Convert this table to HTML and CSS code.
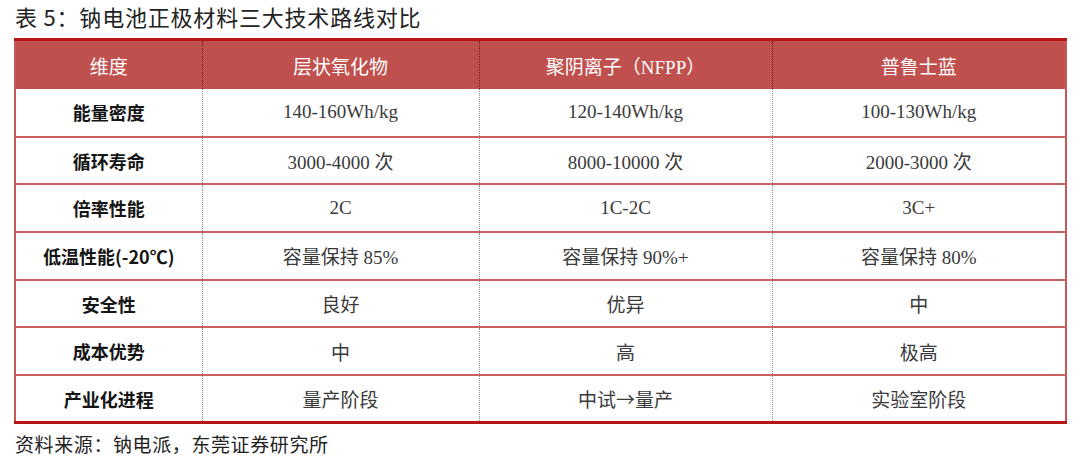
FILE: index.html
```html
<!DOCTYPE html>
<html lang="zh-CN">
<head>
<meta charset="utf-8">
<title>表 5</title>
<link rel="stylesheet" href="styles.css">
</head>
<body>
<div class="page">
  <div class="title">表 5：钠电池正极材料三大技术路线对比</div>
  <table class="cmp">
    <colgroup>
      <col class="c1"><col class="c2"><col class="c3"><col class="c4">
    </colgroup>
    <thead>
      <tr><th>维度</th><th>层状氧化物</th><th>聚阴离子（NFPP）</th><th>普鲁士蓝</th></tr>
    </thead>
    <tbody>
      <tr><td class="k">能量密度</td><td>140-160Wh/kg</td><td>120-140Wh/kg</td><td>100-130Wh/kg</td></tr>
      <tr><td class="k">循环寿命</td><td>3000-4000 次</td><td>8000-10000 次</td><td>2000-3000 次</td></tr>
      <tr><td class="k">倍率性能</td><td>2C</td><td>1C-2C</td><td>3C+</td></tr>
      <tr><td class="k">低温性能(-20<span class="deg">℃</span>)</td><td>容量保持 85%</td><td>容量保持 90%+</td><td>容量保持 80%</td></tr>
      <tr><td class="k">安全性</td><td>良好</td><td>优异</td><td>中</td></tr>
      <tr><td class="k">成本优势</td><td>中</td><td>高</td><td>极高</td></tr>
      <tr><td class="k">产业化进程</td><td>量产阶段</td><td>中试<span class="arrow">→</span>量产</td><td>实验室阶段</td></tr>
    </tbody>
  </table>
  <div class="source">资料来源：钠电派，东莞证券研究所</div>
</div>
</body>
</html>
```

FILE: styles.css
```css
html, body {
  margin: 0;
  padding: 0;
  background: #ffffff;
}

.page {
  width: 1080px;
  height: 468px;
  overflow: hidden;
  font-family: "Noto Sans CJK SC", "Noto Sans", sans-serif;
}

.title {
  padding-left: 15px;
  font-size: 22px;
  line-height: 33px;
  height: 33px;
  margin-bottom: 5px;
  color: #222222;
  letter-spacing: 0.8px;
}

.cmp {
  margin-left: 14px;
  width: 1051px;
  border-collapse: collapse;
  table-layout: fixed;
  border-top: 3px solid #b81414;
  border-bottom: 3px solid #b81414;
  border-left: 2px solid #c75a57;
  border-right: 2px solid #c75a57;
}

.c1 { width: 187px; }
.c2 { width: 277px; }
.c3 { width: 293px; }
.c4 { width: 294px; }

.cmp th {
  height: 48px;
  padding: 0;
  background: #c0504d;
  color: #ffffff;
  font-weight: 400;
  font-size: 19px;
  font-family: "Liberation Serif", "Noto Sans CJK SC", serif;
  text-align: center;
  vertical-align: middle;
  border-left: 1px dotted #6e2220;
}

.cmp th:first-child {
  border-left: none;
}

.cmp tbody tr {
  height: 47.7px;
}

.cmp td {
  padding: 0;
  text-align: center;
  vertical-align: middle;
  font-size: 19px;
  font-family: "Liberation Serif", "Noto Sans CJK SC", serif;
  color: #3a3a3a;
  border-top: 2px solid #c9625f;
  border-left: 1px dotted #8a8a8a;
}

.cmp td .arrow {
  font-family: "Noto Sans CJK SC", sans-serif;
}

.cmp td .deg {
  font-family: "Noto Sans CJK SC", sans-serif;
}

.cmp td.k {
  font-family: "Noto Sans CJK SC", "Noto Sans", sans-serif;
  font-weight: 700;
  font-size: 18px;
  color: #151515;
  border-left: none;
}

.cmp tbody tr:first-child td {
  border-top: none;
}

.source {
  padding-left: 15px;
  margin-top: 5px;
  font-size: 19px;
  line-height: 30px;
  color: #222222;
  letter-spacing: 0.6px;
}
```
